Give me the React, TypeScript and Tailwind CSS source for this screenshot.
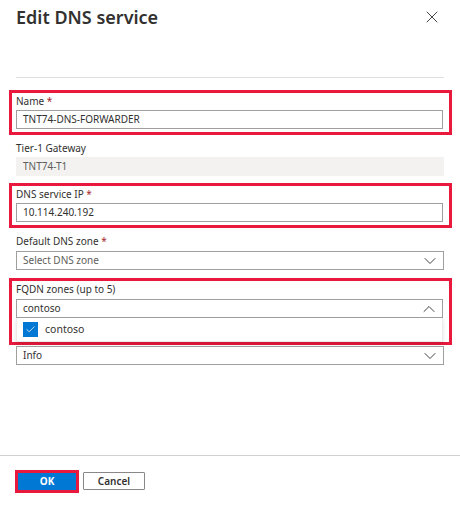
import { ChevronDown, ChevronUp, X, Check } from "lucide-react"

const font = "font-['Segoe_UI','Noto_Sans',sans-serif]"

function Label({ text, required }: { text: string; required?: boolean }) {
  return (
    <div className="h-[17px] text-[10px] leading-[17px] text-[#323130]">
      {text}
      {required && <span className="text-[#a4262c]"> *</span>}
    </div>
  )
}

function Select({ value, placeholder, open }: { value?: string; placeholder?: string; open?: boolean }) {
  return (
    <div className="flex h-[19px] items-center justify-between border border-[#a19f9d] bg-white pl-[6px] pr-[3px] text-[10px]">
      <span className={value ? "text-[#323130]" : "text-[#605e5c]"}>{value ?? placeholder}</span>
      {open ? (
        <ChevronUp className="h-[20px] w-[20px] text-[#323130]" strokeWidth={1.1} />
      ) : (
        <ChevronDown className="h-[20px] w-[20px] text-[#323130]" strokeWidth={1.1} />
      )}
    </div>
  )
}

function RedBox({ children }: { children: React.ReactNode }) {
  return (
    <div className="ml-[9px] w-[443px] border-[3px] border-[#e8193c] pl-[4px] pr-[6px]">
      {children}
    </div>
  )
}

export default function App() {
  return (
    <div className={`${font} relative flex h-[517px] w-[460px] flex-col bg-white`}>
      {/* header */}
      <div className="mx-4 flex h-[78px] items-start justify-between border-b border-[#e1dfdd]">
        <h1 className="mt-[3px] text-[18px] font-semibold leading-[28px] text-[#323130]">Edit DNS service</h1>
        <X className="mr-[2px] mt-[7px] h-[20px] w-[20px] text-[#323130]" strokeWidth={1.1} />
      </div>

      <div className="mt-[12px]">
        <RedBox>
          <div className="pb-[3px]">
            <Label text="Name" required />
            <div className="flex h-[19px] items-center border border-[#a19f9d] pl-[6px] text-[10px] text-[#323130]">
              TNT74-DNS-FORWARDER
            </div>
          </div>
        </RedBox>

        <div className="mx-4 mt-[5px]">
          <div className="h-[17px] text-[10px] leading-[17px] text-[#323130]">Tier-1 Gateway</div>
          <div className="flex h-[19px] items-center bg-[#f3f2f1] pl-[7px] text-[10px] text-[#605e5c]">TNT74-T1</div>
        </div>

        <div className="mt-[7px]">
          <RedBox>
            <div className="pb-[3px]">
              <Label text="DNS service IP" required />
              <div className="flex h-[19px] items-center border border-[#a19f9d] pl-[6px] text-[10px] text-[#323130]">
                10.114.240.192
              </div>
            </div>
          </RedBox>
        </div>

        <div className="mx-4 mt-[5px]">
          <div className="h-[18px] text-[10px] leading-[17px] text-[#323130]">
            Default DNS zone<span className="text-[#a4262c]"> *</span>
          </div>
          <Select placeholder="Select DNS zone" />
        </div>

        <div className="mt-[8px]">
          <RedBox>
            <div className="h-[18px] text-[10px] leading-[17px] text-[#323130]">FQDN zones (up to 5)</div>
            <Select value="contoso" open />
            <div className="flex h-[24px] items-center gap-[7px] border-x border-b border-[#edebe9] bg-white pl-[6px] shadow-[0_2px_4px_rgba(0,0,0,0.12)]">
              <div className="flex h-[15px] w-[15px] items-center justify-center bg-[#0078d4]">
                <Check className="h-[11px] w-[11px] text-white" strokeWidth={1.6} />
              </div>
              <span className="text-[10.5px] text-[#323130]">contoso</span>
            </div>
          </RedBox>
        </div>

        <div className="mx-4 mt-[1px]">
          <Select value="Info" />
        </div>
      </div>

      {/* footer */}
      <div className="mt-auto h-[62px] border-t border-[#d2d0ce] pl-[15px] pt-[14px]">
        <div className="flex items-start gap-[4px]">
          <div className="border-[3px] border-[#e8193c]">
            <button className="flex h-[17px] w-[58px] items-center justify-center bg-[#0078d4] text-[10px] font-bold text-white">
              OK
            </button>
          </div>
          <button className="mt-[2px] flex h-[18px] w-[62px] items-center justify-center rounded-[1px] border border-[#8a8886] bg-white text-[10px] font-semibold text-[#323130]">
            Cancel
          </button>
        </div>
      </div>
    </div>
  )
}
